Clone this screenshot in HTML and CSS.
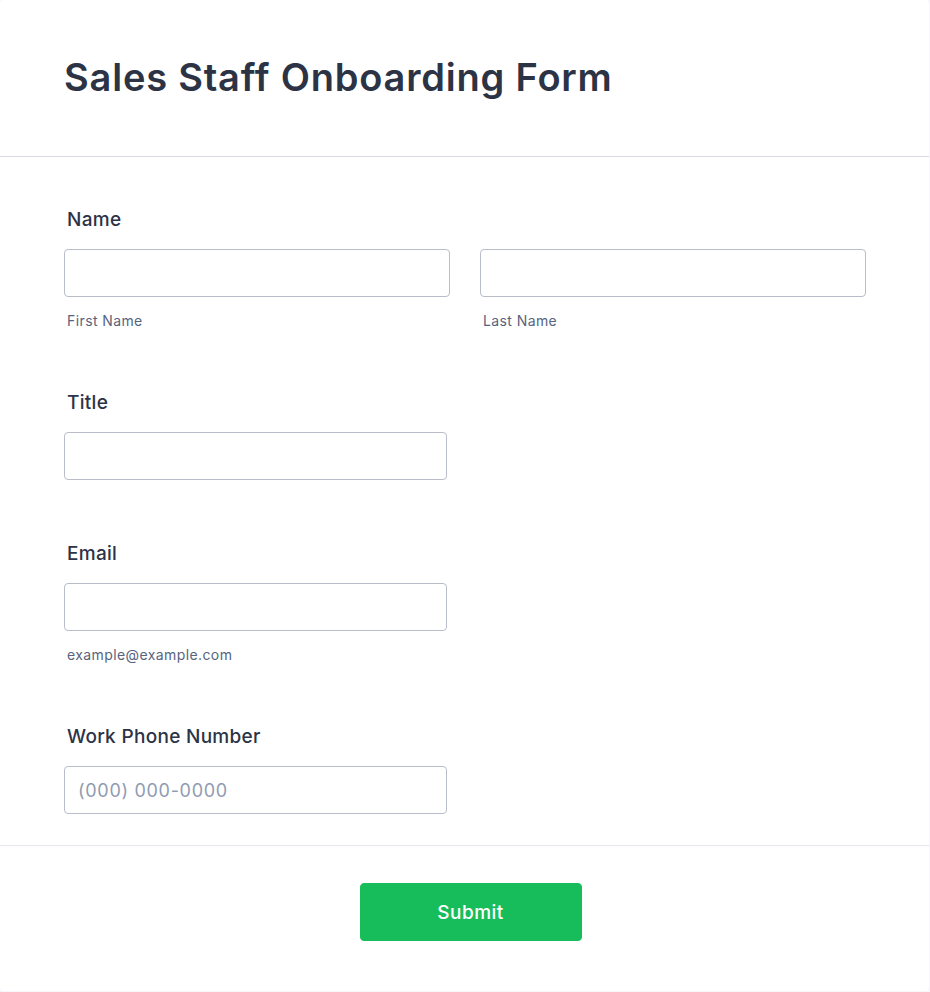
FILE: index.html
```html
<!DOCTYPE html>
<html lang="en">
<head>
<meta charset="utf-8">
<title>Sales Staff Onboarding Form</title>
<link rel="stylesheet" href="styles.css">
</head>
<body>
<form class="card">
  <header class="form-header">
    <h1 class="form-title">Sales Staff Onboarding Form</h1>
  </header>
  <div class="form-body">
    <div class="field">
      <label class="field-label">Name</label>
      <div class="name-row">
        <div class="sub">
          <input class="input input-half" type="text">
          <span class="sublabel">First Name</span>
        </div>
        <div class="sub">
          <input class="input input-half" type="text">
          <span class="sublabel">Last Name</span>
        </div>
      </div>
    </div>
    <div class="field">
      <label class="field-label">Title</label>
      <input class="input input-single" type="text">
    </div>
    <div class="field">
      <label class="field-label">Email</label>
      <div class="sub">
        <input class="input input-single" type="email">
        <span class="sublabel">example@example.com</span>
      </div>
    </div>
    <div class="field field-last">
      <label class="field-label">Work Phone Number</label>
      <input class="input input-single" type="tel" placeholder="(000) 000-0000">
    </div>
  </div>
  <footer class="form-footer">
    <button class="submit" type="button">Submit</button>
  </footer>
</form>
</body>
</html>
```
FILE: styles.css
```css
* { box-sizing: border-box; }
html, body { margin: 0; padding: 0; }
body {
  background: #f7f7fb;
  font-family: Inter, "Noto Sans", "Liberation Sans", sans-serif;
  color: #2c3345;
  width: 930px;
}
.card {
  display: block;
  width: 929px;
  background: #ffffff;
  border-radius: 4px;
  margin: 0;
}
.form-header {
  height: 157px;
  border-bottom: 1px solid #d8dae6;
  padding: 53px 0 0 64px;
}
.form-title {
  margin: 0;
  font-size: 38px;
  line-height: 48px;
  font-weight: 600;
  color: #2c3345;
  letter-spacing: 0.8px;
}
.form-body {
  padding: 50px 64px 31px 64px;
}
.field {
  display: flex;
  flex-direction: column;
  margin-bottom: 61px;
}
.field-last { margin-bottom: 0; }
.field-label {
  display: block;
  font-size: 19px;
  line-height: 24px;
  font-weight: 500;
  color: #2c3345;
  letter-spacing: 0.3px;
  padding: 1px 0 0 3px;
  margin-bottom: 17px;
}
.name-row {
  display: flex;
  gap: 30px;
}
.sub {
  display: flex;
  flex-direction: column;
}
.input {
  display: block;
  height: 48px;
  border: 1px solid #b8bdc9;
  border-radius: 4px;
  background: #fff;
  font-family: inherit;
  font-size: 18px;
  padding: 0 13px;
  color: #2c3345;
  outline: none;
}
.input::placeholder { color: #8f9bb0; letter-spacing: 0.7px; font-weight: 400; }
.input-half { width: 386px; }
.input-single { width: 383px; }
.sublabel {
  display: block;
  margin-top: 15px;
  font-size: 14px;
  line-height: 17px;
  color: #57647e;
  letter-spacing: 0.4px;
  padding-left: 3px;
}
.form-footer {
  border-top: 1px solid #e6e7ee;
  padding: 37px 0 50px 0;
  display: flex;
  justify-content: center;
}
.submit {
  width: 222px;
  height: 58px;
  background: #18bd5b;
  border: 1px solid #18bd5b;
  border-radius: 4px;
  color: #ffffff;
  font-family: inherit;
  font-size: 19px;
  font-weight: 500;
  letter-spacing: 0.5px;
  padding-top: 2px;
  margin-left: 12px;
}
```
